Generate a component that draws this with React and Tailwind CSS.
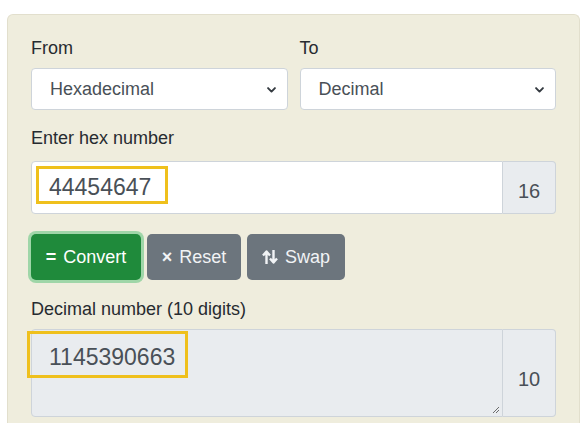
import React, { useState } from "react";

function Chevron() {
  return (
    <svg width="11" height="11" viewBox="0 0 16 16" className="shrink-0">
      <path d="M3 6l5 5 5-5" fill="none" stroke="#343a40" strokeWidth="2.8" strokeLinecap="round" strokeLinejoin="round" />
    </svg>
  );
}

function SwapIcon() {
  return (
    <svg width="16" height="16" viewBox="0 0 16 16">
      <path d="M4.5 15V3M1 6.5l3.5-4 3.5 4" fill="none" stroke="currentColor" strokeWidth="2.4" strokeLinejoin="round" />
      <path d="M11.5 1v12M8 9.5l3.5 4 3.5-4" fill="none" stroke="currentColor" strokeWidth="2.4" strokeLinejoin="round" />
    </svg>
  );
}

function Select({ value }) {
  return (
    <div className="h-[42px] flex items-center justify-between bg-white border border-[#ced4da] rounded-[4px] pl-[18px] pr-[10px] text-[18px] text-[#495057]">
      <span>{value}</span>
      <Chevron />
    </div>
  );
}

export default function App() {
  const [hex] = useState("44454647");
  const dec = parseInt(hex, 16).toString();

  return (
    <div className="min-h-screen bg-white pt-[14px] px-[7px] text-[#272b30]" style={{ fontFamily: '"Liberation Sans", Arial, sans-serif' }}>
      <div className="w-[573px] h-[409px] bg-[#efeddd] border border-[#e2dfcd] border-b-0 rounded-t-[6px] px-[23px] pt-[20px]">
        <div className="grid grid-cols-2 gap-x-[12px]">
          <div>
            <div className="text-[18px] leading-[27px] mb-[6px]">From</div>
            <Select value="Hexadecimal" />
          </div>
          <div>
            <div className="text-[18px] leading-[27px] mb-[6px]">To</div>
            <Select value="Decimal" />
          </div>
        </div>

        <div className="text-[18px] leading-[27px] mt-[15px] mb-[9px]">Enter hex number</div>
        <div className="relative flex h-[53px]">
          <div className="flex-1 flex items-center bg-white border border-[#ced4da] rounded-l-[4px] pl-[17px] text-[23px] text-[#495057]">
            {hex}
          </div>
          <div className="w-[53px] flex items-center justify-center bg-[#e9ecef] border border-l-0 border-[#ced4da] rounded-r-[4px] text-[20px] text-[#495057] pt-[6px]">
            16
          </div>
          <div className="absolute left-[5px] top-[5px] w-[132px] h-[38px] border-[3px] border-[#efc01c]" />
        </div>

        <div className="flex gap-[6px] mt-[20px]">
          <button className="h-[46px] w-[110px] flex items-center justify-center gap-[7px] bg-[#1f8a3b] text-white text-[18px] rounded-[5px] shadow-[0_0_0_3px_rgba(132,206,149,0.75)]">
            <span className="font-bold text-[18px]">=</span>
            <span>Convert</span>
          </button>
          <button className="h-[46px] w-[94px] flex items-center justify-center gap-[7px] bg-[#6c757d] text-[#f1f3f5] text-[18px] rounded-[5px]">
            <span className="font-bold text-[18px]">×</span>
            <span>Reset</span>
          </button>
          <button className="h-[46px] w-[98px] flex items-center justify-center gap-[7px] bg-[#6c757d] text-[#f1f3f5] text-[18px] rounded-[5px]">
            <SwapIcon />
            <span>Swap</span>
          </button>
        </div>

        <div className="text-[18px] leading-[27px] mt-[16px] mb-[6px]">Decimal number (10 digits)</div>
        <div className="relative flex h-[88px]">
          <div className="relative flex-1 bg-[#e9ecef] border border-[#ced4da] rounded-l-[4px] pl-[17px] pt-[10px] text-[23px] leading-[34px] text-[#495057]">
            {dec}
            <svg width="8" height="8" viewBox="0 0 8 8" className="absolute right-[2px] bottom-[2px]">
              <path d="M1 7L7 1M4 7L7 4" stroke="#6c6c6c" strokeWidth="1" />
            </svg>
          </div>
          <div className="w-[53px] flex items-center justify-center bg-[#e9ecef] border border-l-0 border-[#ced4da] rounded-r-[4px] text-[20px] text-[#495057] pt-[12px]">
            10
          </div>
          <div className="absolute left-[-4px] top-[2px] w-[161px] h-[47px] border-[3px] border-[#efc01c]" />
        </div>
      </div>
    </div>
  );
}
